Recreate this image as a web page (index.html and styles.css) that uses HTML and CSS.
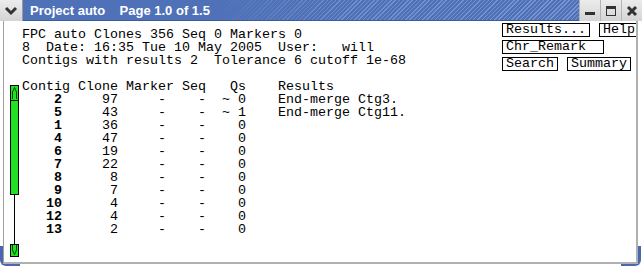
FILE: index.html
```html
<!DOCTYPE html>
<html lang="en">
<head>
    <meta charset="UTF-8">
    <title>Project auto</title>
    <link rel="stylesheet" href="styles.css">
</head>
<body>
    <div class="window">
        <div class="titlebar">
            <div class="tbtn menu">
                <svg width="14" height="10" viewBox="0 0 14 10"><polyline points="2,2 7,7 12,2" fill="none" stroke="#333" stroke-width="3"/></svg>
            </div>
            <div class="title">Project auto    Page 1.0 of 1.5</div>
            <div class="tbtn">
                <svg width="12" height="12" viewBox="0 0 12 12"><rect x="1" y="7" width="10" height="3" fill="#333"/></svg>
            </div>
            <div class="tbtn">
                <svg width="12" height="12" viewBox="0 0 12 12"><rect x="1.5" y="1.5" width="9" height="9" fill="none" stroke="#333"/><rect x="1" y="1" width="10" height="3" fill="#333"/></svg>
            </div>
            <div class="tbtn">
                <svg width="12" height="12" viewBox="0 0 12 12"><path d="M2 2 L10 10 M10 2 L2 10" stroke="#333" stroke-width="3"/></svg>
            </div>
        </div>

        <div class="frame">
            <div class="pane">
                <div class="scroll">
                    <div class="arrow up">
                        <svg width="7" height="13" viewBox="0 0 7 13"><polyline points="1.5,13 1.5,6 3.5,1.5 5.5,6 5.5,13" fill="none" stroke="#004400" stroke-width="1"/></svg>
                    </div>
                    <div class="thumb"></div>
                    <div class="track"></div>
                    <div class="arrow down">
                        <svg width="7" height="11" viewBox="0 0 7 11"><polyline points="1.5,0 1.5,5 3.5,9.5 5.5,5 5.5,0" fill="none" stroke="#004400" stroke-width="1"/></svg>
                    </div>
                </div>

                <div class="main">
                    <div class="top">
<pre class="info">FPC auto Clones 356 Seq 0 Markers 0
8  Date: 16:35 Tue 10 May 2005  User:   will
Contigs with results 2  Tolerance 6 cutoff 1e-68
 </pre>
                        <div class="panel">
                            <div class="row">
                                <span class="box">Results...</span>
                                <span class="box help">Help</span>
                            </div>
                            <div class="row">
                                <span class="box entry">Chr_Remark</span>
                            </div>
                            <div class="row">
                                <span class="box">Search</span>
                                <span class="box">Summary</span>
                            </div>
                        </div>
                    </div>
<pre class="table">Contig Clone Marker Seq   Qs    Results
    <b>2</b>     97     -    -  ~ 0    End-merge Ctg3.
    <b>5</b>     43     -    -  ~ 1    End-merge Ctg11.
    <b>1</b>     36     -    -    0
    <b>4</b>     47     -    -    0
    <b>6</b>     19     -    -    0
    <b>7</b>     22     -    -    0
    <b>8</b>      8     -    -    0
    <b>9</b>      7     -    -    0
   <b>10</b>      4     -    -    0
   <b>12</b>      4     -    -    0
   <b>13</b>      2     -    -    0</pre>
                </div>
            </div>
        </div>
    </div>
</body>
</html>
```

FILE: styles.css
```css
body {
    margin: 0;
    background: #fff;
}
.window {
    width: 642px;
    height: 268px;
    display: flex;
    flex-direction: column;
    background: #fff;
    overflow: hidden;
}
.titlebar {
    height: 21px;
    display: flex;
    flex: none;
}
.tbtn {
    width: 21px;
    height: 21px;
    display: flex;
    align-items: center;
    justify-content: center;
    background: linear-gradient(#ececec, #d4d4d4);
    border-left: 1px solid #b4b4b4;
    box-sizing: border-box;
}
.tbtn.menu {
    width: 23px;
    border-left: none;
    border-right: 1px solid #9a9a9a;
}
.title {
    flex: 1;
    color: #fff;
    font-family: "Liberation Sans", Arial, sans-serif;
    font-weight: bold;
    font-size: 13px;
    line-height: 21px;
    padding-left: 7px;
    white-space: pre;
    background:
        linear-gradient(90deg, #4f71b8 0, #4f71b8 190px, rgba(79, 113, 184, 0.2) 320px, rgba(79, 113, 184, 0) 100%),
        repeating-linear-gradient(135deg, #4f71b8 0, #4f71b8 2px, #7b96d0 2px, #7b96d0 3px);
    border-bottom: 1px solid #3c5a9c;
    box-sizing: border-box;
}
.frame {
    flex: 1;
    display: flex;
    padding: 0 4px 4px 3px;
    position: relative;
    min-height: 0;
}
.frame::before,
.frame::after {
    content: "";
    position: absolute;
    bottom: 2px;
    width: 20px;
    height: 20px;
    border-bottom: 5px solid #4a68b0;
    box-sizing: border-box;
}
.frame::before {
    left: 0;
    border-left: 5px solid #4a68b0;
    border-bottom-left-radius: 6px;
}
.frame::after {
    right: 1px;
    border-right: 5px solid #4a68b0;
    border-bottom-right-radius: 6px;
}
.pane {
    flex: 1;
    display: flex;
    background: #fff;
    border-left: 1px solid #a0a0a0;
    border-right: 2px solid #b0b0b0;
    border-bottom: 2px solid #b0b0b0;
    overflow: hidden;
    position: relative;
    z-index: 1;
}
.scroll {
    width: 9px;
    margin: 64px 0 0 6px;
    display: flex;
    flex-direction: column;
    align-items: center;
    flex: none;
}
.arrow {
    width: 9px;
    background: #22e022;
    border: 1px solid #000;
    box-sizing: border-box;
    display: flex;
    justify-content: center;
}
.arrow.up {
    height: 16px;
}
.arrow.down {
    height: 13px;
}
.thumb {
    width: 9px;
    height: 94px;
    background: #22e022;
    border: 1px solid #000;
    border-top: none;
    box-sizing: border-box;
}
.track {
    width: 1px;
    height: 49px;
    background: #000;
}
.main {
    flex: 1;
    margin-left: 3px;
    display: flex;
    flex-direction: column;
}
.top {
    display: flex;
    justify-content: space-between;
    align-items: flex-start;
}
pre {
    margin: 0;
    font-family: "Liberation Mono", monospace;
    font-size: 13.33px;
    line-height: 13px;
    color: #000;
}
pre b {
    font-weight: bold;
}
.info {
    margin-top: 7px;
}
.panel {
    display: flex;
    flex-direction: column;
    gap: 3px;
    padding-top: 2px;
    width: 134px;
}
.row {
    display: flex;
    gap: 9px;
}
.box {
    font-family: "Liberation Mono", monospace;
    font-size: 13.33px;
    line-height: 12px;
    border: 1px solid #000;
    padding: 0 3px;
    white-space: pre;
}
.box.help {
    padding-right: 1px;
}
.box.entry {
    padding-right: 17px;
}
```
